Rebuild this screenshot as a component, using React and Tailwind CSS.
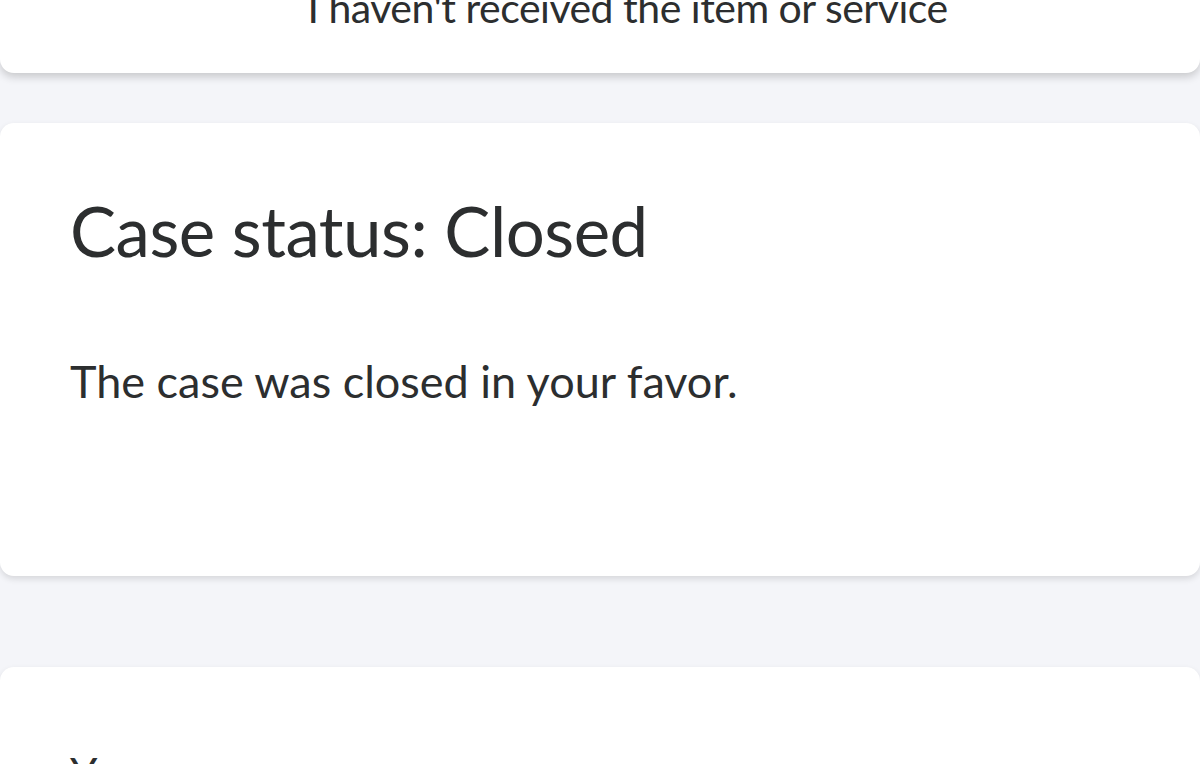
import React from "react";

function Card({ className = "", children }) {
  return (
    <div
      className={`bg-white rounded-[14px] shadow-[0_3px_6px_rgba(0,0,0,0.12)] ${className}`}
    >
      {children}
    </div>
  );
}

export default function App() {
  return (
    <div
      className="min-h-[764px] h-[764px] overflow-hidden bg-[#f4f5f9] text-[#2c2e2f]"
      style={{ fontFamily: "Lato, 'Open Sans', sans-serif" }}
    >
      <Card className="h-[73px] rounded-t-none overflow-hidden flex justify-center shadow-[0_4px_8px_rgba(0,0,0,0.18)]">
        <p className="pl-[55px] mt-[-18px] text-[41px] leading-[52px] tracking-[-0.5px]">
          I haven't received the item or service
        </p>
      </Card>

      <Card className="mt-[50px] h-[453px] px-[70px] pt-[68px]">
        <h1 className="text-[69px] leading-[80px] tracking-[-0.5px]">
          Case status: Closed
        </h1>
        <p className="mt-[84px] text-[45px] leading-[52px]">
          The case was closed in your favor.
        </p>
      </Card>

      <Card className="mt-[91px] h-[200px] px-[70px] pt-[80px]">
        <p className="text-[44px] leading-[52px]">Your</p>
      </Card>
    </div>
  );
}
